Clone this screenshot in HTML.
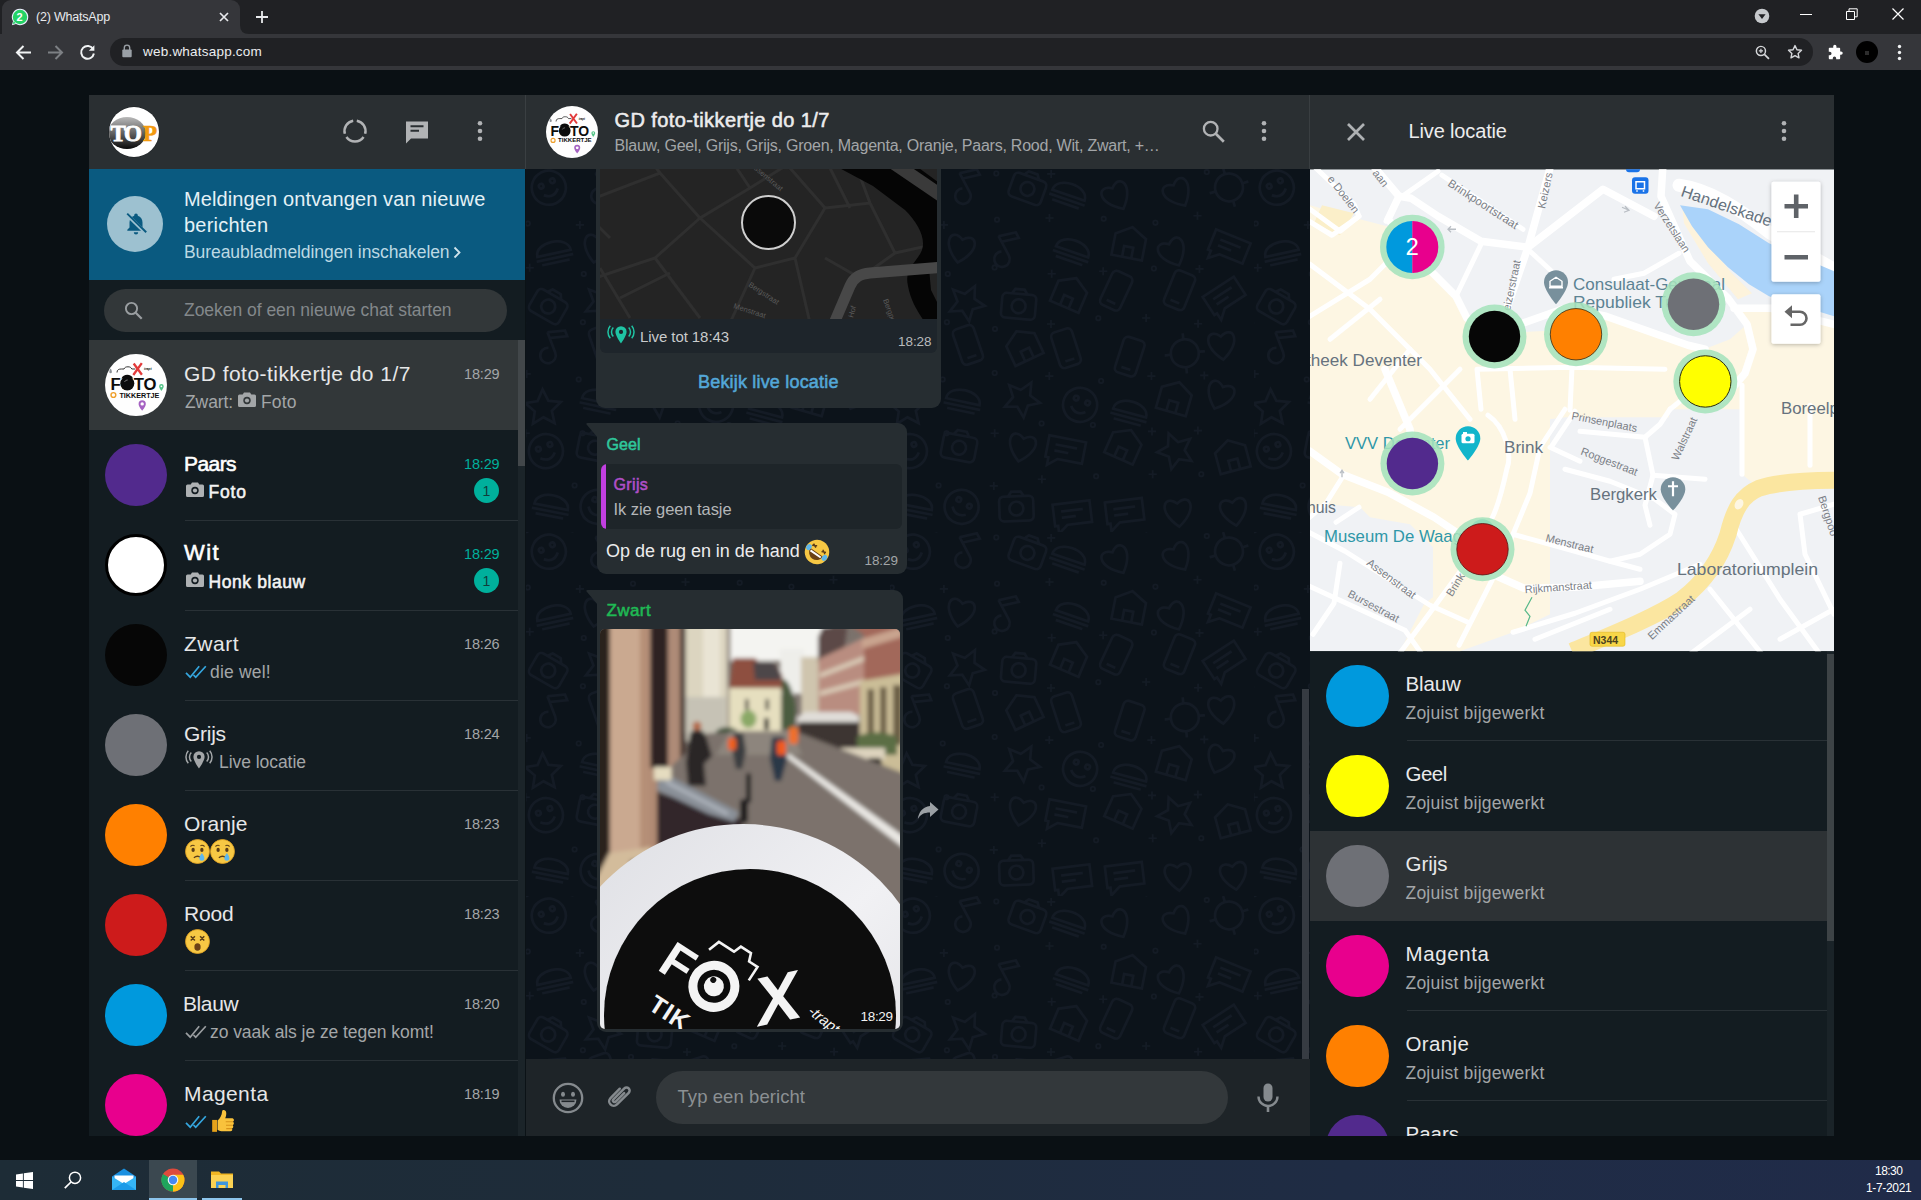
<!DOCTYPE html>
<html lang="nl">
<head>
<meta charset="utf-8">
<title>(2) WhatsApp</title>
<style>
*{box-sizing:border-box;margin:0;padding:0}
html,body{width:1921px;height:1200px;overflow:hidden;background:#0a1014}
body{position:relative;font-family:"Liberation Sans",sans-serif;color:#e9e9ea}
.a{position:absolute}
.t{position:absolute;white-space:nowrap;line-height:1;font-size:20px}
.c{position:absolute;border-radius:50%}
.sb{font-weight:normal!important;-webkit-text-stroke:.55px currentColor}
svg{position:absolute;overflow:visible}
/* chrome */
#tabbar{left:0;top:0;width:1921px;height:34px;background:#202124}
#tab{left:2px;top:0;width:238px;height:34px;background:#35363a;border-radius:9px 9px 0 0}
#toolbar{left:0;top:34px;width:1921px;height:36px;background:#35363a}
#omni{left:110px;top:38px;width:1703px;height:28px;border-radius:14px;background:#202124}
/* app */
#app{left:0;top:0;width:1921px;height:1200px;clip-path:inset(95px 87px 64px 89px)}
.hdr{top:0;height:73.500px;background:#2a2f32}
.sec{color:#a6a9ab}

.sep{height:1px;background:#293136}
.av{position:absolute;border-radius:50%;width:62px;height:62px}
</style>
<style>#ttab{letter-spacing:-0.211px}
#turl{letter-spacing:0.216px}
#b1{letter-spacing:0.114px}
#b2{letter-spacing:0.227px}
#b3{letter-spacing:-0.065px}
#sr{letter-spacing:-0.029px}
#n0{letter-spacing:0.455px}
#s0a{letter-spacing:-0.085px}
#s0b{letter-spacing:0.156px}
#n1{letter-spacing:-0.565px}
#s1{letter-spacing:0.823px}
#n2{letter-spacing:1.467px}
#s2{letter-spacing:0.583px}
#n3{letter-spacing:0.500px}
#s3{letter-spacing:0.194px}
#n4{letter-spacing:-0.268px}
#s4{letter-spacing:-0.051px}
#n5{letter-spacing:0.074px}
#n6{letter-spacing:-0.168px}
#n7{letter-spacing:-0.401px}
#s7{letter-spacing:-0.067px}
#n8{letter-spacing:0.394px}
#tm0{letter-spacing:-0.174px}
#tm1{letter-spacing:-0.174px}
#tm2{letter-spacing:-0.174px}
#tm3{letter-spacing:-0.174px}
#tm4{letter-spacing:-0.174px}
#tm5{letter-spacing:-0.174px}
#tm6{letter-spacing:-0.174px}
#tm7{letter-spacing:-0.174px}
#tm8{letter-spacing:-0.174px}
#h1{letter-spacing:0.402px}
#h2{letter-spacing:-0.234px}
#m1a{letter-spacing:-0.075px}
#m1t{letter-spacing:-0.049px}
#m1b{letter-spacing:0.185px}
#m2n{letter-spacing:0.101px}
#m2q{letter-spacing:0.352px}
#m2r{letter-spacing:-0.072px}
#m2m{letter-spacing:-0.016px}
#m2t{letter-spacing:-0.099px}
#m3n{letter-spacing:0.400px}
#m3t{letter-spacing:-0.299px}
#ft{letter-spacing:0.071px}
#rh{letter-spacing:-0.142px}
#r0{letter-spacing:-0.161px}
#r1{letter-spacing:-0.538px}
#r2{letter-spacing:-0.060px}
#r3{letter-spacing:0.603px}
#r4{letter-spacing:0.374px}
#ck1{letter-spacing:-0.533px}
#ck2{letter-spacing:-0.335px}
#q0{letter-spacing:0.212px}
#q1{letter-spacing:0.212px}
#q2{letter-spacing:0.212px}
#q3{letter-spacing:0.212px}
#q4{letter-spacing:0.212px}
#q5{letter-spacing:0.212px}
</style>
</head>
<body>
<svg width="0" height="0" style="left:0;top:0"><defs>
<symbol id="fotoLogo" viewBox="0 0 62 62">
<circle cx="31" cy="31" r="31" fill="#fefefe"/>
<path d="M12 18.500c0-3 2-3.500 4.500-3.500h2.500c.8-1.800 2-2.200 4-2.200s3 .6 3.800 2.200h3.500" stroke="#222" stroke-width=".9" fill="none"/>
<path d="M28.700 9.500l8.200 11.300M36.800 9.200L28.300 21" stroke="#e23a3a" stroke-width="2.300" fill="none"/>
<text x="39" y="16.200" font-family="Liberation Sans,sans-serif" font-size="3.400" font-weight="bold" font-style="italic" fill="#111">trapt</text>
<text x="5.500" y="35.700" font-family="Liberation Sans,sans-serif" font-size="16.800" font-weight="bold" fill="#0c0c0c" textLength="46" lengthAdjust="spacingAndGlyphs">FOTO</text>
<circle cx="22.300" cy="29.500" r="7" fill="#0c0c0c"/><path d="M16.500 24.500c1.500-5 10-5 11.500 0z" fill="#0c0c0c"/><path d="M19.500 28a3.200 3.200 0 0 1 3.200-2" stroke="#777" stroke-width="1" fill="none"/>
<text x="14.400" y="43.500" font-family="Liberation Sans,sans-serif" font-size="7.100" font-weight="bold" fill="#0c0c0c" textLength="40" lengthAdjust="spacingAndGlyphs">TIKKERTJE</text>
<circle cx="8.400" cy="41" r="2.400" stroke="#efa02c" stroke-width="1.400" fill="none"/>
<path d="M56.400 30a2.300 2.300 0 0 1 2.300 2.300c0 1.700-2.300 4.700-2.300 4.700s-2.300-3-2.300-4.700A2.300 2.300 0 0 1 56.400 30z" fill="#52c487"/><circle cx="56.400" cy="32.300" r=".9" fill="#fff"/>
<path d="M37.200 46.300a3.600 3.600 0 0 1 3.600 3.600c0 2.600-3.600 6.800-3.600 6.800s-3.600-4.200-3.600-6.800a3.600 3.600 0 0 1 3.600-3.600z" fill="#a562c2"/><circle cx="37.200" cy="49.900" r="1.700" fill="#fff"/>
<path d="M5.600 14.500c1 1.500 1.300 2.600 1.300 3.400a1.300 1.300 0 0 1-2.600 0c0-.8.300-1.900 1.300-3.400z" fill="#8d9196"/>
</symbol>
</defs></svg>

<!-- ===== Chrome browser frame ===== -->
<div id="tabbar" class="a"></div>
<div id="tab" class="a"></div>
<div id="toolbar" class="a"></div>
<div id="omni" class="a"></div>
<!-- tab -->
<svg style="left:11px;top:8px" width="18" height="18" viewBox="0 0 18 18"><path d="M9 .8a8.2 8.2 0 0 0-7 12.4L.9 17.2l4.1-1.1A8.2 8.2 0 1 0 9 .8z" fill="#eef"/><circle cx="9" cy="9" r="7.2" fill="#25d366"/><path d="M2.6 13.2 1.9 16l2.9-.8z" fill="#25d366"/></svg>
<span class="t" id="tfav" style="left:16.5px;top:3.6px;font-size:11px;font-weight:bold;color:#fff;line-height:26px">2</span>
<span class="t" id="ttab" style="left:36px;top:11px;font-size:12.5px;color:#e8eaed">(2) WhatsApp</span>
<svg style="left:219px;top:12px" width="10" height="10" viewBox="0 0 10 10"><path d="M1 1l8 8M9 1l-8 8" stroke="#e8eaed" stroke-width="1.7" fill="none"/></svg>
<svg style="left:255px;top:10px" width="14" height="14" viewBox="0 0 14 14"><path d="M7 1v12M1 7h12" stroke="#e8eaed" stroke-width="1.8" fill="none"/></svg>
<svg style="left:240px;top:25px" width="9" height="9" viewBox="0 0 9 9"><path d="M0 9V0q0 9 9 9z" fill="#35363a"/></svg>
<!-- window controls -->
<svg style="left:1754px;top:8px" width="16" height="16" viewBox="0 0 16 16"><circle cx="8" cy="8" r="7.3" fill="#c6c9cc"/><path d="M4.4 6.2h7.2L8 11z" fill="#202124"/></svg>
<div class="a" style="left:1800px;top:14px;width:12px;height:1px;background:#fff"></div>
<svg style="left:1846px;top:8px" width="12" height="12" viewBox="0 0 12 12"><path d="M.5 3.5h8v8h-8z" stroke="#fff" fill="none"/><path d="M3 3.5V.8h8.2v8H8.6" stroke="#fff" fill="none"/></svg>
<svg style="left:1892px;top:8px" width="12" height="12" viewBox="0 0 12 12"><path d="M.5.5l11 11M11.500 .5l-11 11" stroke="#fff" stroke-width="1.2" fill="none"/></svg>
<!-- nav buttons -->
<svg style="left:15px;top:44px" width="17" height="17" viewBox="0 0 17 17"><path d="M16 8.500H2.500M8.500 2l-6.500 6.500 6.500 6.500" stroke="#f1f3f4" stroke-width="2" fill="none"/></svg>
<svg style="left:47px;top:44px" width="17" height="17" viewBox="0 0 17 17"><path d="M1 8.500h13.500M8.500 2l6.500 6.500-6.500 6.500" stroke="#7d8084" stroke-width="2" fill="none"/></svg>
<svg style="left:79px;top:44px" width="17" height="17" viewBox="0 0 17 17"><path d="M14.200 5.200A6.400 6.400 0 1 0 14.900 9.500" stroke="#f1f3f4" stroke-width="2" fill="none"/><path d="M15.400 1.200v5.600H9.800z" fill="#f1f3f4"/></svg>
<!-- omnibox -->
<svg style="left:122px;top:44px" width="10" height="14" viewBox="0 0 10 14"><rect x="0.300" y="5.500" width="9.400" height="7.800" rx="1" fill="#9aa0a6"/><path d="M2.300 6V3.800a2.700 2.700 0 0 1 5.400 0V6" stroke="#9aa0a6" stroke-width="1.400" fill="none"/></svg>
<span class="t" id="turl" style="left:143px;top:45px;font-size:13.5px;color:#eceef0">web.whatsapp.com</span>
<svg style="left:1755px;top:45px" width="15.500" height="15.500" viewBox="0 0 17 17"><circle cx="6.500" cy="6.500" r="5" stroke="#d5d7da" stroke-width="1.600" fill="none"/><path d="M10.300 10.300l5 5" stroke="#d5d7da" stroke-width="1.900"/><path d="M6.500 4.200v4.600M4.200 6.500h4.600" stroke="#d5d7da" stroke-width="1.300"/></svg>
<svg style="left:1787px;top:44px" width="16" height="16" viewBox="0 0 18 18"><path d="M9 1.800l2.200 4.700 5.100.6-3.800 3.500 1 5L9 13.100l-4.500 2.500 1-5L1.700 7.100l5.100-.6z" stroke="#d5d7da" stroke-width="1.600" fill="none" stroke-linejoin="round"/></svg>
<svg style="left:1827px;top:45px" width="16" height="16" viewBox="0 0 18 18"><path d="M7 1.500a1.800 1.800 0 0 1 3.600 0V3h3.200a1 1 0 0 1 1 1v3.200h1a1.900 1.900 0 0 1 0 3.800h-1v4a1 1 0 0 1-1 1h-3.500v-1.200a1.900 1.900 0 0 0-3.800 0V16H3a1 1 0 0 1-1-1v-3.500h1.200a1.900 1.900 0 0 0 0-3.800H2V4a1 1 0 0 1 1-1h4z" fill="#fff"/></svg>
<div class="c" style="left:1856px;top:41px;width:22px;height:22px;background:#000"></div>
<div class="a" style="left:1865px;top:51px;width:4px;height:4px;background:#2c2c2c"></div>
<svg style="left:1897px;top:44px" width="5" height="17" viewBox="0 0 5 17"><circle cx="2.500" cy="2.500" r="1.700" fill="#f1f3f4"/><circle cx="2.500" cy="8.500" r="1.700" fill="#f1f3f4"/><circle cx="2.500" cy="14.500" r="1.700" fill="#f1f3f4"/></svg>

<!-- ===== WhatsApp app ===== -->
<div id="app" class="a">
<div class="a" style="left:89px;top:95px;width:1745px;height:1041px;background:#131c21"></div>
<div class="a hdr" style="left:89px;top:95px;width:436px"></div>
<svg style="left:108px;top:106px" width="52" height="52" viewBox="0 0 52 52"><defs><clipPath id="cpTop"><circle cx="26" cy="26" r="25"/></clipPath><linearGradient id="gTop" x1="0" y1="0" x2="0" y2="1"><stop offset="0" stop-color="#b9b9b9"/><stop offset=".45" stop-color="#6a6a6a"/><stop offset="1" stop-color="#0a0a0a"/></linearGradient></defs><circle cx="26" cy="26" r="25.500" fill="#1d2124"/><circle cx="26" cy="26" r="25" fill="#fff"/><g clip-path="url(#cpTop)"><ellipse cx="19" cy="27" rx="19" ry="16" fill="url(#gTop)"/><text x="2.500" y="35" font-family="Liberation Serif,serif" font-weight="bold" font-size="23" fill="#fff" stroke="#fff" stroke-width=".8" letter-spacing="-1.500">TO</text><text x="35" y="35" font-family="Liberation Serif,serif" font-weight="bold" font-size="23" fill="#f39a0e" stroke="#f39a0e" stroke-width=".6">P</text></g></svg>
<svg style="left:342px;top:118px" width="26" height="26" viewBox="0 0 26 26"><g fill="none" stroke="#b1b3b5" stroke-width="2.500"><path d="M14.800 2.650A10.500 10.500 0 0 1 23.150 15.720"/><path d="M21.600 19.020A10.500 10.500 0 0 1 4.400 19.020"/><path d="M2.850 15.720A10.500 10.500 0 0 1 11.200 2.650"/></g></svg>
<svg style="left:405px;top:120px" width="24" height="24" viewBox="0 0 24 24"><path d="M1 1.500h22v17H6L1 23.500z" fill="#b1b3b5"/><path d="M5.500 6.200h13M5.500 10.700h8.500" stroke="#2a2f32" stroke-width="2"/></svg>
<svg style="left:477px;top:120px" width="6" height="22" viewBox="0 0 6 22"><circle cx="3" cy="3.200" r="2.300" fill="#b1b3b5"/><circle cx="3" cy="11" r="2.300" fill="#b1b3b5"/><circle cx="3" cy="18.800" r="2.300" fill="#b1b3b5"/></svg>
<div class="a" style="left:89px;top:168.500px;width:436px;height:111.500px;background:#0a5a80"></div>
<div class="c" style="left:107px;top:196px;width:56px;height:56px;background:#9dc1d0"></div>
<svg style="left:122px;top:210px" width="28" height="28" viewBox="0 0 28 28"><path d="M14 3.500a1.800 1.800 0 0 1 1.800 1.800v.5c3 .9 4.700 3.500 4.700 6.700v5l2.200 2.300v1H5.300v-1l2.200-2.300v-5c0-3.200 1.700-5.800 4.700-6.700v-.5A1.800 1.800 0 0 1 14 3.500z" fill="#0a5a80"/><path d="M11.800 22.300h4.400a2.200 2.200 0 0 1-4.400 0z" fill="#0a5a80"/><path d="M4.500 4.200l19.500 19" stroke="#9dc1d0" stroke-width="3.600"/><path d="M5.200 3.600l19 18.700" stroke="#0a5a80" stroke-width="1.900"/></svg>
<span class="t" id="b1" style="left:184px;top:189px;font-size:20px;color:#e4f1f6">Meldingen ontvangen van nieuwe</span>
<span class="t" id="b2" style="left:184px;top:214.500px;font-size:20px;color:#e4f1f6">berichten</span>
<span class="t" id="b3" style="left:184px;top:244.200px;font-size:17.500px;color:#bcd9e4">Bureaubladmeldingen inschakelen</span>
<svg style="left:453px;top:246px" width="8" height="13" viewBox="0 0 8 13"><path d="M1.500 1.500l5 5-5 5" stroke="#cfe4ec" stroke-width="1.800" fill="none"/></svg>
<div class="a" style="left:104px;top:289px;width:403px;height:43px;border-radius:22px;background:#323739"></div>
<svg style="left:124px;top:301px" width="20" height="20" viewBox="0 0 20 20"><circle cx="7.500" cy="7.500" r="5.600" stroke="#9a9ea1" stroke-width="1.900" fill="none"/><path d="M11.700 11.700l6 6" stroke="#9a9ea1" stroke-width="2.200"/></svg>
<span class="t" id="sr" style="left:184px;top:302px;font-size:17.500px;color:#83888b">Zoeken of een nieuwe chat starten</span>
<div class="a" style="left:89px;top:340px;width:429px;height:90px;background:#323739"></div>
<div class="a" style="left:518px;top:340px;width:7px;height:796px;background:#1b2429"></div>
<div class="a" style="left:518px;top:340px;width:7px;height:126px;background:#42474a"></div>
<div class="a" style="left:524.500px;top:95px;width:1.500px;height:73.500px;background:#3a3f42"></div>
<div class="a" style="left:525px;top:169px;width:1.500px;height:967px;background:#0b1216"></div>
<div class="a sep" style="left:185px;top:520px;width:333px"></div>
<div class="a sep" style="left:185px;top:610px;width:333px"></div>
<div class="a sep" style="left:185px;top:700px;width:333px"></div>
<div class="a sep" style="left:185px;top:790px;width:333px"></div>
<div class="a sep" style="left:185px;top:880px;width:333px"></div>
<div class="a sep" style="left:185px;top:970px;width:333px"></div>
<div class="a sep" style="left:185px;top:1060px;width:333px"></div>
<svg style="left:105px;top:354px" width="62" height="62" viewBox="0 0 62 62"><use href="#fotoLogo"/></svg>
<span class="t" id="n0" style="left:184px;top:363.0px;font-size:21px;font-weight:normal;color:#e6e7e8">GD foto-tikkertje do 1/7</span>
<span class="t" id="tm0" style="left:464px;top:366.5px;font-size:14.500px;color:#a3a6a8">18:29</span>
<span class="t" id="s0a" style="left:185px;top:393.68625px;font-size:17.500px;color:#a3a6a8">Zwart:</span>
<svg style="left:238px;top:392px" width="18" height="15" viewBox="0 0 18 15"><path d="M1.500 2.500h3.200l1.300-2h6l1.300 2h3.200a1.500 1.500 0 0 1 1.500 1.500v9.500a1.500 1.500 0 0 1-1.500 1.500h-15A1.500 1.500 0 0 1 0 13.500V4a1.500 1.500 0 0 1 1.500-1.500z" fill="#a3a6a8"/><circle cx="9" cy="8.500" r="3.700" fill="#323739"/><circle cx="9" cy="8.500" r="2.100" fill="#a3a6a8"/></svg>
<span class="t" id="s0b" style="left:261px;top:393.68625px;font-size:17.500px;color:#a3a6a8">Foto</span>
<div class="c" style="left:105px;top:444px;width:62px;height:62px;background:#522a8d"></div>
<span class="t sb" id="n1" style="left:184px;top:453.0px;font-size:21px;font-weight:bold;color:#ffffff">Paars</span>
<span class="t" id="tm1" style="left:464px;top:456.5px;font-size:14.500px;color:#00b09c">18:29</span>
<div class="c" style="left:474px;top:478px;width:25px;height:25px;background:#00b09c"></div>
<span class="t" id="bd1" style="left:482.500px;top:484px;font-size:14px;color:#103d3a">1</span>
<svg style="left:186px;top:482px" width="18" height="15" viewBox="0 0 18 15"><path d="M1.500 2.500h3.200l1.300-2h6l1.300 2h3.200a1.500 1.500 0 0 1 1.500 1.500v9.500a1.500 1.500 0 0 1-1.500 1.500h-15A1.500 1.500 0 0 1 0 13.500V4a1.500 1.500 0 0 1 1.500-1.500z" fill="#aeb1b3"/><circle cx="9" cy="8.500" r="3.700" fill="#131c21"/><circle cx="9" cy="8.500" r="2.100" fill="#aeb1b3"/></svg>
<span class="t sb" id="s1" style="left:208.500px;top:483.68625px;font-size:17.500px;font-weight:bold;color:#f4f4f4">Foto</span>
<div class="c" style="left:105px;top:534px;width:62px;height:62px;background:#fff;border:3px solid #000"></div>
<span class="t sb" id="n2" style="left:184px;top:542.2px;font-size:22px;font-weight:bold;color:#ffffff">Wit</span>
<span class="t" id="tm2" style="left:464px;top:546.5px;font-size:14.500px;color:#00b09c">18:29</span>
<div class="c" style="left:474px;top:568px;width:25px;height:25px;background:#00b09c"></div>
<span class="t" id="bd2" style="left:482.500px;top:574px;font-size:14px;color:#103d3a">1</span>
<svg style="left:186px;top:572px" width="18" height="15" viewBox="0 0 18 15"><path d="M1.500 2.500h3.200l1.300-2h6l1.300 2h3.200a1.500 1.500 0 0 1 1.500 1.500v9.500a1.500 1.500 0 0 1-1.500 1.500h-15A1.500 1.500 0 0 1 0 13.500V4a1.500 1.500 0 0 1 1.500-1.500z" fill="#aeb1b3"/><circle cx="9" cy="8.500" r="3.700" fill="#131c21"/><circle cx="9" cy="8.500" r="2.100" fill="#aeb1b3"/></svg>
<span class="t sb" id="s2" style="left:208.500px;top:573.68625px;font-size:17.500px;font-weight:bold;color:#f4f4f4">Honk blauw</span>
<div class="c" style="left:105px;top:624px;width:62px;height:62px;background:#060606"></div>
<span class="t" id="n3" style="left:184px;top:633.0px;font-size:21px;font-weight:normal;color:#e6e7e8">Zwart</span>
<span class="t" id="tm3" style="left:464px;top:636.5px;font-size:14.500px;color:#a3a6a8">18:26</span>
<svg style="left:185px;top:665px" width="22" height="14" viewBox="0 0 22 14"><path d="M1 7.800l4.200 4.400L14.200 1.200M8.500 10l2.200 2.200L20.800 1.200" stroke="#35a6de" stroke-width="1.700" fill="none"/></svg>
<span class="t" id="s3" style="left:210px;top:663.68625px;font-size:17.500px;color:#a3a6a8">die wel!</span>
<div class="c" style="left:105px;top:714px;width:62px;height:62px;background:#6e7076"></div>
<span class="t" id="n4" style="left:184px;top:723.0px;font-size:21px;font-weight:normal;color:#e6e7e8">Grijs</span>
<span class="t" id="tm4" style="left:464px;top:726.5px;font-size:14.500px;color:#a3a6a8">18:24</span>
<svg style="left:185px;top:750px" width="28" height="20" viewBox="0 0 28 20"><path d="M14 1.200a5.600 5.600 0 0 0-5.600 5.600c0 4.200 5.600 11.700 5.600 11.700s5.600-7.500 5.600-11.700A5.600 5.600 0 0 0 14 1.200z" fill="#a3a6a8"/><circle cx="14" cy="6.900" r="2.100" fill="#131c21"/><path d="M6.300 2.500a6.500 6.500 0 0 0 0 9M3.300 .8a9.400 9.400 0 0 0 0 12.400M21.700 2.500a6.500 6.500 0 0 1 0 9M24.700 .8a9.400 9.400 0 0 1 0 12.400" stroke="#a3a6a8" stroke-width="1.500" fill="none"/></svg>
<span class="t" id="s4" style="left:219px;top:753.68625px;font-size:17.500px;color:#a3a6a8">Live locatie</span>
<div class="c" style="left:105px;top:804px;width:62px;height:62px;background:#ff8000"></div>
<span class="t" id="n5" style="left:184px;top:813.0px;font-size:21px;font-weight:normal;color:#e6e7e8">Oranje</span>
<span class="t" id="tm5" style="left:464px;top:816.5px;font-size:14.500px;color:#a3a6a8">18:23</span>
<svg style="left:185px;top:839px" width="25" height="25" viewBox="0 0 24 24"><circle cx="12" cy="12" r="11.500" fill="#f7c844"/><circle cx="12" cy="12" r="11.500" fill="none" stroke="#e0a020" stroke-width=".8"/><ellipse cx="7.800" cy="10.500" rx="1.600" ry="2" fill="#5b3d17"/><ellipse cx="16.200" cy="10.500" rx="1.600" ry="2" fill="#5b3d17"/><path d="M8.500 18q3.500-2.800 7 0" stroke="#5b3d17" stroke-width="1.300" fill="none"/><path d="M5.200 7.200q2-1.800 4-.8M18.800 7.200q-2-1.800-4-.8" stroke="#5b3d17" stroke-width="1" fill="none"/><path d="M16.200 13.500c1.800 2.400 2.400 3.800 2.400 5a2.400 2.400 0 0 1-4.800 0c0-1.200.6-2.600 2.400-5z" fill="#5eb7ec"/></svg>
<svg style="left:210px;top:839px" width="25" height="25" viewBox="0 0 24 24"><circle cx="12" cy="12" r="11.500" fill="#f7c844"/><circle cx="12" cy="12" r="11.500" fill="none" stroke="#e0a020" stroke-width=".8"/><ellipse cx="7.800" cy="10.500" rx="1.600" ry="2" fill="#5b3d17"/><ellipse cx="16.200" cy="10.500" rx="1.600" ry="2" fill="#5b3d17"/><path d="M8.500 18q3.500-2.800 7 0" stroke="#5b3d17" stroke-width="1.300" fill="none"/><path d="M5.200 7.200q2-1.800 4-.8M18.800 7.200q-2-1.800-4-.8" stroke="#5b3d17" stroke-width="1" fill="none"/><path d="M16.200 13.500c1.800 2.400 2.400 3.800 2.400 5a2.400 2.400 0 0 1-4.800 0c0-1.200.6-2.600 2.400-5z" fill="#5eb7ec"/></svg>
<div class="c" style="left:105px;top:894px;width:62px;height:62px;background:#cd1b1b"></div>
<span class="t" id="n6" style="left:184px;top:903.0px;font-size:21px;font-weight:normal;color:#e6e7e8">Rood</span>
<span class="t" id="tm6" style="left:464px;top:906.5px;font-size:14.500px;color:#a3a6a8">18:23</span>
<svg style="left:185px;top:929px" width="25" height="25" viewBox="0 0 24 24"><circle cx="12" cy="12" r="11.500" fill="#f7c844"/><circle cx="12" cy="12" r="11.500" fill="none" stroke="#e0a020" stroke-width=".8"/><path d="M5.500 7l4 4M9.500 7l-4 4M14.500 7l4 4M18.500 7l-4 4" stroke="#5b3d17" stroke-width="1.500"/><ellipse cx="12" cy="17.300" rx="3" ry="3.600" fill="#6b4116"/></svg>
<div class="c" style="left:105px;top:984px;width:62px;height:62px;background:#0099dd"></div>
<span class="t" id="n7" style="left:183px;top:993.0px;font-size:21px;font-weight:normal;color:#e6e7e8">Blauw</span>
<span class="t" id="tm7" style="left:464px;top:996.5px;font-size:14.500px;color:#a3a6a8">18:20</span>
<svg style="left:185px;top:1025px" width="22" height="14" viewBox="0 0 22 14"><path d="M1 7.800l4.200 4.400L14.200 1.200M8.500 10l2.200 2.200L20.800 1.200" stroke="#9a9ea1" stroke-width="1.700" fill="none"/></svg>
<span class="t" id="s7" style="left:210px;top:1023.68625px;font-size:17.500px;color:#a3a6a8">zo vaak als je ze tegen komt!</span>
<div class="c" style="left:105px;top:1074px;width:62px;height:62px;background:#e8008d"></div>
<span class="t" id="n8" style="left:184px;top:1083.0px;font-size:21px;font-weight:normal;color:#e6e7e8">Magenta</span>
<span class="t" id="tm8" style="left:464px;top:1086.5px;font-size:14.500px;color:#a3a6a8">18:19</span>
<svg style="left:185px;top:1115px" width="22" height="14" viewBox="0 0 22 14"><path d="M1 7.800l4.200 4.400L14.200 1.200M8.500 10l2.200 2.200L20.800 1.200" stroke="#35a6de" stroke-width="1.700" fill="none"/></svg>
<svg style="left:210px;top:1108px" width="26" height="26" viewBox="0 0 24 24"><path d="M2 11h4.500v11H2z" fill="#e6a21a"/><path d="M7 11.500c2-1.500 4-4.500 4.200-8.500C11.300 1.300 14.800 1 15 4.500c.1 2-.4 3.500-1 5h6.200c2 0 2.600 2.400 1 3.200 1.300.8 1 2.800-.3 3.200 1 .9.700 2.600-.6 3 .7 1.200 0 2.600-1.500 2.600H12c-2 0-3.500-.6-5-1.500z" fill="#f9c23c"/><path d="M14.500 12.700h6.700M14.800 15.900h6.100M15 19h5.300" stroke="#d8921a" stroke-width="1" fill="none"/></svg>

<div class="a" style="left:526px;top:168px;width:784px;height:891px;background:#0c131a"></div>
<svg style="left:526px;top:168px" width="784" height="891" viewBox="0 0 784 891"><defs><pattern id="dood" width="364" height="364" patternUnits="userSpaceOnUse"><g fill="none" stroke="#141b25" stroke-width="1.600"><g transform="translate(22.8 19.7) rotate(-26) scale(1.55)"><circle r="11"/><circle cx="-4" cy="-3" r="1.500"/><circle cx="4" cy="-3" r="1.500"/><path d="M-5 3q5 5 10 0"/></g><g transform="translate(83.8 18.7) rotate(-28) scale(1.55)"><path d="M-4-12v14a5 5 0 1 1-3-4.500M-4-12l11 3v4l-11-3"/></g><g transform="translate(137.4 20.9) rotate(20) scale(1.55)"><rect x="-11" y="-8" width="22" height="16" rx="3"/><circle r="4.500"/><path d="M-5-8l2-3h6l2 3"/></g><g transform="translate(180.5 21.3) rotate(19) scale(1.55)"><path d="M-11 4c0-10 22-10 22 0z"/><path d="M-12 7h24"/><path d="M-9 10h18"/></g><g transform="translate(226.1 27.2) rotate(-28) scale(1.55)"><path d="M0 10C-14-1-8-12 0-5 8-12 14-1 0 10z"/></g><g transform="translate(287.4 24.1) rotate(-30) scale(1.55)"><path d="M0 10C-14-1-8-12 0-5 8-12 14-1 0 10z"/></g><g transform="translate(339.0 19.4) rotate(-17) scale(1.55)"><circle r="9"/><path d="M0-9v-4M0 9v4M-9 0h-4M9 0h4"/></g><g transform="translate(26.7 79.3) rotate(-12) scale(1.55)"><path d="M-11 4c0-10 22-10 22 0z"/><path d="M-12 7h24"/><path d="M-9 10h18"/></g><g transform="translate(70.9 79.3) rotate(12) scale(1.55)"><path d="M0 10C-14-1-8-12 0-5 8-12 14-1 0 10z"/></g><g transform="translate(122.8 81.8) rotate(-28) scale(1.55)"><path d="M-4-12v14a5 5 0 1 1-3-4.500M-4-12l11 3v4l-11-3"/></g><g transform="translate(184.1 77.9) rotate(19) scale(1.55)"><path d="M-11 4c0-10 22-10 22 0z"/><path d="M-12 7h24"/><path d="M-9 10h18"/></g><g transform="translate(239.0 77.4) rotate(11) scale(1.55)"><path d="M-10 8V-6l10-6 10 6V8z"/><path d="M-3 8V1h6v7"/></g><g transform="translate(282.4 83.3) rotate(-25) scale(1.55)"><path d="M0 10C-14-1-8-12 0-5 8-12 14-1 0 10z"/></g><g transform="translate(339.3 78.5) rotate(22) scale(1.55)"><path d="M-12-7h24v14H-4l-6 5v-5h-2z"/><path d="M-7-2h14M-7 2h9"/></g><g transform="translate(22.2 138.6) rotate(30) scale(1.55)"><rect x="-11" y="-8" width="22" height="16" rx="3"/><circle r="4.500"/><path d="M-5-8l2-3h6l2 3"/></g><g transform="translate(76.5 134.6) rotate(27) scale(1.55)"><path d="M0-12l3.500 7.500 8 1-6 5.500 1.500 8L0 6l-7 4 1.500-8-6-5.500 8-1z"/></g><g transform="translate(128.6 138.3) rotate(5) scale(1.55)"><rect x="-11" y="-8" width="22" height="16" rx="3"/><circle r="4.500"/><path d="M-5-8l2-3h6l2 3"/></g><g transform="translate(179.1 127.3) rotate(23) scale(1.55)"><path d="M-10 8V-6l10-6 10 6V8z"/><path d="M-3 8V1h6v7"/></g><g transform="translate(226.2 122.7) rotate(25) scale(1.55)"><rect x="-7" y="-12" width="14" height="24" rx="3"/><path d="M-3 8h6"/></g><g transform="translate(289.5 122.2) rotate(22) scale(1.55)"><rect x="-7" y="-12" width="14" height="24" rx="3"/><path d="M-3 8h6"/></g><g transform="translate(334.1 127.9) rotate(-33) scale(1.55)"><path d="M-12-7h24v14H-4l-6 5v-5h-2z"/><path d="M-7-2h14M-7 2h9"/></g><g transform="translate(33.9 179.4) rotate(-21) scale(1.55)"><path d="M-4-12v14a5 5 0 1 1-3-4.500M-4-12l11 3v4l-11-3"/></g><g transform="translate(77.9 176.9) rotate(-19) scale(1.55)"><rect x="-7" y="-12" width="14" height="24" rx="3"/><path d="M-3 8h6"/></g><g transform="translate(134.3 180.2) rotate(-25) scale(1.55)"><path d="M-10 8V-6l10-6 10 6V8z"/><path d="M-3 8V1h6v7"/></g><g transform="translate(176.0 180.2) rotate(-18) scale(1.55)"><rect x="-7" y="-12" width="14" height="24" rx="3"/><path d="M-3 8h6"/></g><g transform="translate(239.7 188.6) rotate(18) scale(1.55)"><rect x="-7" y="-12" width="14" height="24" rx="3"/><path d="M-3 8h6"/></g><g transform="translate(294.8 185.3) rotate(-6) scale(1.55)"><circle r="9"/><path d="M0-9v-4M0 9v4M-9 0h-4M9 0h4"/></g><g transform="translate(331.7 176.2) rotate(-6) scale(1.55)"><path d="M0 10C-14-1-8-12 0-5 8-12 14-1 0 10z"/></g><g transform="translate(17.2 240.0) rotate(-2) scale(1.55)"><path d="M0-12l3.500 7.500 8 1-6 5.500 1.500 8L0 6l-7 4 1.500-8-6-5.500 8-1z"/></g><g transform="translate(74.1 227.6) rotate(12) scale(1.55)"><path d="M-11 4c0-10 22-10 22 0z"/><path d="M-12 7h24"/><path d="M-9 10h18"/></g><g transform="translate(132.0 230.7) rotate(30) scale(1.55)"><path d="M0-12l3.500 7.500 8 1-6 5.500 1.500 8L0 6l-7 4 1.500-8-6-5.500 8-1z"/></g><g transform="translate(190.1 236.8) rotate(23) scale(1.55)"><circle r="11"/><circle cx="-4" cy="-3" r="1.500"/><circle cx="4" cy="-3" r="1.500"/><path d="M-5 3q5 5 10 0"/></g><g transform="translate(241.2 239.0) rotate(15) scale(1.55)"><path d="M-11 4c0-10 22-10 22 0z"/><path d="M-12 7h24"/><path d="M-9 10h18"/></g><g transform="translate(284.2 232.1) rotate(16) scale(1.55)"><path d="M-10 8V-6l10-6 10 6V8z"/><path d="M-3 8V1h6v7"/></g><g transform="translate(330.1 226.2) rotate(21) scale(1.55)"><path d="M0 10C-14-1-8-12 0-5 8-12 14-1 0 10z"/></g><g transform="translate(19.9 283.1) rotate(-22) scale(1.55)"><circle r="11"/><circle cx="-4" cy="-3" r="1.500"/><circle cx="4" cy="-3" r="1.500"/><path d="M-5 3q5 5 10 0"/></g><g transform="translate(69.0 279.7) rotate(11) scale(1.55)"><rect x="-11" y="-8" width="22" height="16" rx="3"/><circle r="4.500"/><path d="M-5-8l2-3h6l2 3"/></g><g transform="translate(132.0 278.3) rotate(13) scale(1.55)"><path d="M0 10C-14-1-8-12 0-5 8-12 14-1 0 10z"/></g><g transform="translate(175.7 281.5) rotate(11) scale(1.55)"><path d="M-12-7h24v14H-4l-6 5v-5h-2z"/><path d="M-7-2h14M-7 2h9"/></g><g transform="translate(233.5 279.1) rotate(24) scale(1.55)"><path d="M-10 8V-6l10-6 10 6V8z"/><path d="M-3 8V1h6v7"/></g><g transform="translate(285.6 282.6) rotate(-22) scale(1.55)"><path d="M0-12l3.500 7.500 8 1-6 5.500 1.500 8L0 6l-7 4 1.500-8-6-5.500 8-1z"/></g><g transform="translate(342.5 290.3) rotate(-15) scale(1.55)"><path d="M-10 8V-6l10-6 10 6V8z"/><path d="M-3 8V1h6v7"/></g><g transform="translate(26.3 332.7) rotate(11) scale(1.55)"><path d="M-11 4c0-10 22-10 22 0z"/><path d="M-12 7h24"/><path d="M-9 10h18"/></g><g transform="translate(71.6 338.8) rotate(32) scale(1.55)"><circle r="11"/><circle cx="-4" cy="-3" r="1.500"/><circle cx="4" cy="-3" r="1.500"/><path d="M-5 3q5 5 10 0"/></g><g transform="translate(126.4 340.6) rotate(-2) scale(1.55)"><rect x="-11" y="-8" width="22" height="16" rx="3"/><circle r="4.500"/><path d="M-5-8l2-3h6l2 3"/></g><g transform="translate(182.3 345.3) rotate(-7) scale(1.55)"><path d="M-12-7h24v14H-4l-6 5v-5h-2z"/><path d="M-7-2h14M-7 2h9"/></g><g transform="translate(234.6 343.0) rotate(-7) scale(1.55)"><path d="M-12-7h24v14H-4l-6 5v-5h-2z"/><path d="M-7-2h14M-7 2h9"/></g><g transform="translate(288.0 343.2) rotate(-5) scale(1.55)"><path d="M0 10C-14-1-8-12 0-5 8-12 14-1 0 10z"/></g><g transform="translate(343.7 342.3) rotate(-10) scale(1.55)"><path d="M0 10C-14-1-8-12 0-5 8-12 14-1 0 10z"/></g><circle cx="0.2" cy="-1.7" r="2.200"/><circle cx="46.3" cy="-2.6" r="2.200"/><circle cx="106.3" cy="5.5" r="2.200"/><path d="M161.2 1.9v8M157.2 5.9h8"/><circle cx="206.4" cy="-3.4" r="2.200"/><path d="M256.4 -7.5v8M252.4 -3.5h8"/><circle cx="316.8" cy="4.1" r="2.200"/><circle cx="1.8" cy="55.6" r="2.200"/><path d="M53.9 52.9v8M49.9 56.9h8"/><circle cx="107.0" cy="51.7" r="2.200"/><path d="M159.5 46.0v8M155.5 50.0h8"/><circle cx="213.7" cy="50.8" r="2.200"/><circle cx="265.4" cy="54.7" r="2.200"/><path d="M307.5 43.8v8M303.5 47.8h8"/><path d="M3.7 95.8v8M-0.3 99.8h8"/><circle cx="57.8" cy="105.9" r="2.200"/><circle cx="104.6" cy="99.6" r="2.200"/><path d="M161.7 101.8v8M157.7 105.8h8"/><path d="M213.2 99.2v8M209.2 103.2h8"/><circle cx="263.9" cy="100.5" r="2.200"/><path d="M309.5 96.9v8M305.5 100.9h8"/><circle cx="-2.9" cy="155.0" r="2.200"/><circle cx="56.9" cy="154.2" r="2.200"/><circle cx="105.0" cy="160.9" r="2.200"/><path d="M161.0 152.0v8M157.0 156.0h8"/><circle cx="208.3" cy="150.2" r="2.200"/><path d="M256.2 146.0v8M252.2 150.0h8"/><path d="M308.1 151.7v8M304.1 155.7h8"/><path d="M0.7 201.9v8M-3.3 205.9h8"/><circle cx="52.7" cy="211.4" r="2.200"/><circle cx="104.7" cy="205.0" r="2.200"/><path d="M159.3 204.1v8M155.3 208.1h8"/><circle cx="211.1" cy="212.9" r="2.200"/><path d="M261.4 204.1v8M257.4 208.1h8"/><path d="M314.3 203.4v8M310.3 207.4h8"/><path d="M-0.3 261.3v8M-4.3 265.3h8"/><circle cx="56.5" cy="265.3" r="2.200"/><path d="M104.7 261.3v8M100.7 265.3h8"/><circle cx="151.6" cy="255.5" r="2.200"/><circle cx="202.9" cy="256.9" r="2.200"/><path d="M262.0 259.4v8M258.0 263.4h8"/><path d="M307.9 258.6v8M303.9 262.6h8"/><path d="M-4.3 312.6v8M-8.3 316.6h8"/><circle cx="48.6" cy="317.4" r="2.200"/><path d="M103.8 313.9v8M99.8 317.9h8"/><path d="M151.9 307.2v8M147.9 311.2h8"/><circle cx="206.1" cy="308.3" r="2.200"/><path d="M262.7 302.2v8M258.7 306.2h8"/><circle cx="311.3" cy="306.2" r="2.200"/></g></pattern></defs><rect width="784" height="891" fill="url(#dood)"/></svg>
<div class="a" style="left:596px;top:150px;width:345px;height:257.500px;border-radius:9px;background:#262d31"></div>
<div class="a" style="left:600px;top:150px;width:337px;height:203px;border-radius:6px;background:#1e252b"></div>
<svg style="left:600px;top:168px" width="337" height="151" viewBox="0 0 337 151"><defs><clipPath id="cpm1"><rect width="337" height="151"/></clipPath></defs><g clip-path="url(#cpm1)"><rect width="337" height="151" fill="#242424"/>
<g stroke="#2f2f2f" stroke-width="3" fill="none">
<path d="M-5 30L60 5l40 45 50-30 40-25M60 5l-15-20M100 50l-45 40-60 20M100 50l55 50 40-10 30-50-35-40M155 100l-25 55M55 90l45 60M195 90l15 65M225 40l45-5 25 50-35 25-35-20M270 35l-15-40M295 85l45-10M10 70l-20-20M150 20l-20-30M230 0l20 40"/>
<path d="M20 130l50-25M0 100l30 50"/></g>
<path d="M230-5L273 18 305 42C318 55 326 70 322 82 316 96 304 100 308 118 311 134 318 144 326 156H345V-5z" fill="#050505"/>
<path d="M312-5h30v22z" fill="#242424"/><path d="M329 100l10-2v40l-8-16z" fill="#242424"/>
<path d="M292-6l50 34" stroke="#3a3a3a" stroke-width="13" fill="none"/>
<path d="M232 160l18-42c4-9 10-12 20-13l75-6" stroke="#484848" stroke-width="11" fill="none"/>
<g font-family="Liberation Sans,sans-serif" font-size="7.500" fill="#5a5a5a"><text transform="translate(148 118) rotate(33)">Bergstraat</text><text transform="translate(133 140) rotate(18)">Menstraat</text><text transform="translate(150 -2) rotate(40)">Assenstraat</text><text transform="translate(283 132) rotate(70)">Bergpoo</text><text transform="translate(253 150) rotate(-75)">Hof</text></g>
</g></svg>
<div class="c" style="left:741px;top:195px;width:55px;height:55px;background:#0a0a0a;border:2px solid #cfcfcf"></div>
<svg style="left:607px;top:325px" width="28" height="20" viewBox="0 0 28 20"><path d="M14 1.200a5.600 5.600 0 0 0-5.600 5.600c0 4.200 5.600 11.700 5.600 11.700s5.600-7.500 5.600-11.700A5.600 5.600 0 0 0 14 1.200z" fill="#1fc4a4"/><circle cx="14" cy="6.900" r="2.100" fill="#1e252b"/><path d="M6.300 2.500a6.500 6.500 0 0 0 0 9M3.300 .8a9.400 9.400 0 0 0 0 12.400M21.700 2.500a6.500 6.500 0 0 1 0 9M24.700 .8a9.400 9.400 0 0 1 0 12.400" stroke="#1fc4a4" stroke-width="1.500" fill="none"/></svg>
<span class="t" id="m1a" style="left:640px;top:328.800px;font-size:15px;color:#c9cbcc">Live tot 18:43</span>
<span class="t" id="m1t" style="left:898px;top:335px;font-size:13.500px;color:#b9bbbd">18:28</span>
<span class="t sb" id="m1b" style="left:698px;top:372.500px;font-size:18px;font-weight:bold;color:#53a7d8">Bekijk live locatie</span>
<svg style="left:586px;top:423px" width="12" height="16" viewBox="0 0 12 16"><path d="M12 0H1.500C.3 0 0 1 .8 1.800L12 15z" fill="#262d31"/></svg>
<div class="a" style="left:596.500px;top:423px;width:310px;height:150.500px;border-radius:0 9px 9px 9px;background:#262d31"></div>
<span class="t sb" id="m2n" style="left:606.500px;top:436.500px;font-size:16px;font-weight:bold;color:#2fc79c">Geel</span>
<div class="a" style="left:600.500px;top:464px;width:301.500px;height:64.500px;border-radius:6px;background:#1e2529;overflow:hidden"><div class="a" style="left:0;top:0;width:5px;height:65px;background:#c13fe0"></div></div>
<span class="t sb" id="m2q" style="left:613.500px;top:476.500px;font-size:16px;font-weight:bold;color:#b04fc8">Grijs</span>
<span class="t" id="m2r" style="left:613.500px;top:501px;font-size:16.500px;color:#b4b6b8">Ik zie geen tasje</span>
<span class="t" id="m2m" style="left:606px;top:542px;font-size:18px;color:#ececed">Op de rug en in de hand</span>
<svg style="left:804px;top:538.500px" width="26" height="26" viewBox="0 0 24 24"><g transform="rotate(35 12 12)"><circle cx="12" cy="12" r="11.300" fill="#f7c844"/><path d="M5 12.500h14a7 7 0 0 1-14 0z" fill="#6b4116"/><path d="M6.200 13.300h11.600v1.800H6.200z" fill="#fff"/><path d="M4.800 9.500l4-2.300M19.200 9.500l-4-2.300M5 7.500l3.800 1.800M19 7.500l-3.800 1.800" stroke="#5b3d17" stroke-width="1.300" fill="none"/><ellipse cx="3.300" cy="12.500" rx="2.300" ry="3" fill="#5eb7ec"/><ellipse cx="20.700" cy="12.500" rx="2.300" ry="3" fill="#5eb7ec"/></g></svg>
<span class="t" id="m2t" style="left:864.500px;top:554px;font-size:13.500px;color:#a3a6a8">18:29</span>
<svg style="left:586px;top:589.500px" width="12" height="16" viewBox="0 0 12 16"><path d="M12 0H1.500C.3 0 0 1 .8 1.800L12 15z" fill="#262d31"/></svg>
<div class="a" style="left:596.500px;top:589.500px;width:306.500px;height:442px;border-radius:0 9px 9px 9px;background:#262d31"></div>
<span class="t sb" id="m3n" style="left:606.500px;top:601.600px;font-size:17px;font-weight:bold;color:#1fb954">Zwart</span>
<svg style="left:600px;top:629px" width="300" height="400" viewBox="0 0 300 400"><defs><clipPath id="cpph"><rect width="300" height="400" rx="5"/></clipPath><filter id="bl3" x="-10%" y="-10%" width="120%" height="120%"><feGaussianBlur stdDeviation="2.200"/></filter><filter id="bl1"><feGaussianBlur stdDeviation=".7"/></filter>
<linearGradient id="gdisc" x1="0" y1="0" x2="1" y2="1"><stop offset="0" stop-color="#dcdde2"/><stop offset=".5" stop-color="#f1f1f4"/><stop offset="1" stop-color="#d9dade"/></linearGradient></defs>
<g clip-path="url(#cpph)">
<rect width="300" height="400" fill="#7b726c"/>
<g filter="url(#bl3)">
<!-- sky -->
<path d="M118 -8h112v70h-45v-30h-55v-40z" fill="#f4f4f1"/>
<rect x="180" y="20" width="24" height="45" fill="#eeeeea"/>
<!-- left facade -->
<rect x="-8" y="-8" width="18" height="420" fill="#2a211f"/>
<rect x="10" y="-8" width="30.500" height="300" fill="#caa990"/>
<rect x="40" y="-8" width="10.500" height="300" fill="#b58f77"/><rect x="50" y="130" width="8" height="170" fill="#b08a73"/>
<rect x="50.500" y="-8" width="17.500" height="147" fill="#2d2222"/>
<rect x="68" y="-8" width="12" height="152" fill="#ae8b77"/>
<rect x="80" y="-8" width="6" height="150" fill="#4a3a34"/>
<rect x="85.500" y="-8" width="42" height="112" fill="#dcd5c0"/>
<rect x="103" y="-8" width="17" height="80" fill="#e9e4d4"/>
<rect x="86" y="68" width="40" height="44" fill="#c6c2b5"/>
<!-- far building -->
<path d="M129 62l4-33h22l4 4h14l9 12 2 18z" fill="#8e4f3f"/>
<path d="M153 33h20l8 12v6h-26z" fill="#4d4648"/>
<rect x="129" y="59" width="52" height="45" fill="#e6dfbf"/>
<rect x="145" y="70" width="3.500" height="11" fill="#4f4b42"/><rect x="165.500" y="70" width="3.500" height="11" fill="#4f4b42"/><rect x="164" y="89" width="5" height="12" fill="#3d3a34"/>
<path d="M182 50c6 0 9 8 12 20s2 24-3 30h-10z" fill="#4b5b41"/>
<ellipse cx="148.500" cy="90" rx="8" ry="9" fill="#8aa866"/>
<ellipse cx="127" cy="106" rx="12" ry="8" fill="#46573f"/>
<!-- right buildings -->
<rect x="201" y="28" width="19" height="64" fill="#cfc5ae"/>
<path d="M218 8l5-10h24l-3 24-26 12z" fill="#5b4a46"/>
<path d="M218.500 30l26-12 20-10v78h-46z" fill="#b98d80"/>
<path d="M220 44l44-17v5l-44 17zM220 62l44-12v5l-44 12z" fill="#d9cab6"/>
<path d="M244-8h64v60l-44 6V6z" fill="#a2685a"/>
<path d="M262 10l40-12v10l-40 12z" fill="#c9a48f"/>
<path d="M260 52l48-8v104l-48-14z" fill="#cbbd97"/>
<path d="M267.500 60h6.500v52h-6.500zM280 58h6.500v56H280zM293 56h9v60h-9z" fill="#6a5d45"/>
<path d="M197 88l8-5h46l8 4v7h-62z" fill="#e0ddd8"/>
<path d="M199 93h60v33l-60-12z" fill="#3d3631"/>
<path d="M257 108c8-6 30-6 40 0v18h-40z" fill="#5c6e45"/>
<rect x="241" y="119" width="44" height="12" fill="#ddd3bd"/>
<rect x="267.500" y="129" width="14" height="23" rx="3" fill="#26221f"/>
<!-- street -->
<path d="M108 104h92l108 42v140H57V150z" fill="#7b726c"/>
<path d="M130 102h62l10 24h-86z" fill="#8d857d"/>
<path d="M185 127l4.500-2L310 212v12z" fill="#e9e7e3"/>
<!-- people -->
<path d="M90 105c2-6 14-6 16 2l6 20-8 8 2 22h-18l-2-24z" fill="#2b2826"/><circle cx="97" cy="97" r="4.500" fill="#b36a4a"/>
<path d="M134 104h9l3 18-4 18h-6l-4-20z" fill="#3a3d3f"/><rect x="128" y="109" width="8" height="12" rx="2" fill="#f0601c"/>
<path d="M172 108h12l3 22-6 22h-6l-5-22z" fill="#2c3846"/><rect x="177" y="112" width="9" height="14" rx="2" fill="#f25a1e"/>
<rect x="189" y="98" width="9" height="17" rx="3" fill="#f0702a"/>
<path d="M9 224l42-6v60H-8v-20z" fill="#d3bc9b"/><path d="M30 232l28-6v60H30z" fill="#3a2c2a"/>
<!-- sign board -->
<path d="M57 163l85 28v100H57z" fill="#30262a"/>
<path d="M57.500 152l14-4 67 35-4 10-26-8-51-24z" fill="#8a9098"/>
<path d="M66 153l62 32" stroke="#b4bac2" stroke-width="3"/>
<rect x="54" y="138" width="17.500" height="13" fill="#e5dcc0"/>
<rect x="146" y="144" width="5" height="30" rx="2.500" fill="#1c1a1b"/><rect x="140" y="170" width="8" height="24" rx="3.500" fill="#1c1a1b"/>
</g>
<!-- white disc + black disc -->
<circle cx="143" cy="389" r="194" fill="url(#gdisc)" filter="url(#bl1)"/>
<circle cx="150" cy="386" r="146" fill="#101010" filter="url(#bl1)"/>
<g fill="#f4f4f4" font-family="Liberation Sans,sans-serif" font-weight="bold">
<g transform="translate(56 340) rotate(33)"><text x="0" y="0" font-size="50">F</text><circle cx="58" cy="-17" r="21" fill="none" stroke="#f4f4f4" stroke-width="9"/><circle cx="58" cy="-17" r="10"/><circle cx="54" cy="-22" r="3" fill="#101010"/>
<path d="M34-45l4-12h18l3-8h12l3 8h10v16" fill="none" stroke="#f4f4f4" stroke-width="2.600"/>
<text x="14" y="38" font-size="25" letter-spacing="1">TIK</text></g>
<g transform="translate(160 397) rotate(-12)"><text x="0" y="0" font-size="68" font-style="italic">X</text></g>
<text transform="translate(207 384) rotate(38)" font-size="15" font-style="italic" font-weight="normal">-trapt</text>

</g>
</g></svg>

<span class="t" id="m3t" style="left:860.500px;top:1010px;font-size:13.500px;color:#f2f2f2">18:29</span>
<svg style="left:917px;top:801px" width="22" height="20" viewBox="0 0 22 20"><path d="M13 1l8.500 7.500L13 16v-4.500C7 11.500 3.500 13.500.8 18 1.800 11 5.500 6 13 5z" fill="#9ba0a4"/></svg>
<div class="a hdr" style="left:526px;top:95px;width:784px"></div>
<svg style="left:545.500px;top:105.500px" width="52" height="52" viewBox="0 0 62 62"><use href="#fotoLogo"/></svg>
<span class="t sb" id="h1" style="left:614.500px;top:109.600px;font-size:20px;font-weight:bold;color:#ececed">GD foto-tikkertje do 1/7</span>
<span class="t" id="h2" style="left:614.500px;top:138px;font-size:16px;color:#a3a6a8">Blauw, Geel, Grijs, Grijs, Groen, Magenta, Oranje, Paars, Rood, Wit, Zwart, +…</span>
<svg style="left:1202px;top:120px" width="24" height="24" viewBox="0 0 24 24"><circle cx="8.700" cy="8.700" r="6.800" stroke="#b1b3b5" stroke-width="2.300" fill="none"/><path d="M13.800 13.800l8 8" stroke="#b1b3b5" stroke-width="2.700"/></svg>
<svg style="left:1261px;top:120px" width="6" height="22" viewBox="0 0 6 22"><circle cx="3" cy="3.200" r="2.300" fill="#b1b3b5"/><circle cx="3" cy="11" r="2.300" fill="#b1b3b5"/><circle cx="3" cy="18.800" r="2.300" fill="#b1b3b5"/></svg>
<div class="a" style="left:1302px;top:689px;width:7px;height:370px;background:#363b42"></div>
<div class="a" style="left:1309.500px;top:169px;width:1px;height:967px;background:#1a2227"></div>
<div class="a" style="left:526px;top:1058.500px;width:784px;height:78px;background:#1e2428"></div>
<div class="a" style="left:656px;top:1070.500px;width:572px;height:53px;border-radius:26.500px;background:#33383b"></div>
<span class="t" id="ft" style="left:677.500px;top:1087.500px;font-size:18.500px;color:#8b9093">Typ een bericht</span>
<svg style="left:551.500px;top:1081.500px" width="32" height="32" viewBox="0 0 32 32"><circle cx="16" cy="16" r="14.200" stroke="#858a8e" stroke-width="2.300" fill="none"/><ellipse cx="11" cy="12.300" rx="2" ry="2.500" fill="#858a8e"/><ellipse cx="21" cy="12.300" rx="2" ry="2.500" fill="#858a8e"/><path d="M7.500 17.500h17a8.500 8.500 0 0 1-17 0z" fill="#858a8e"/><path d="M9.500 19.300h13" stroke="#1e2428" stroke-width="1.600"/></svg>
<svg style="left:603px;top:1080px" width="32" height="32" viewBox="0 0 28 28"><g transform="rotate(45 14 14)"><path d="M10 9v11.500a4 4 0 0 0 8 0V6a2.700 2.700 0 0 0-5.400 0v13.500a1.400 1.400 0 0 0 2.800 0V9" stroke="#858a8e" stroke-width="2.200" fill="none" stroke-linecap="round"/></g></svg>
<svg style="left:1257px;top:1082px" width="22" height="32" viewBox="0 0 22 32"><rect x="6.500" y="1.500" width="9" height="18" rx="4.500" fill="#858a8e"/><path d="M1.500 14.500a9.500 9.500 0 0 0 19 0" stroke="#858a8e" stroke-width="2.400" fill="none"/><path d="M11 24v6" stroke="#858a8e" stroke-width="2.600"/></svg>

<div class="a" style="left:1310px;top:651px;width:524px;height:485px;background:#131c21"></div>
<div class="a" style="left:1310px;top:831px;width:517px;height:90px;background:#2d3235"></div>
<div class="c" style="left:1326px;top:664.5px;width:62.500px;height:62.500px;background:#0099dd"></div>
<span class="t" id="r0" style="left:1405.500px;top:674.2px;font-size:20.500px;color:#e9e9ea">Blauw</span>
<span class="t" id="q0" style="left:1405.500px;top:704.8px;font-size:17.500px;color:#a3a6a8">Zojuist bijgewerkt</span>
<div class="a sep" style="left:1407px;top:740px;width:420px"></div>
<div class="c" style="left:1326px;top:754.5px;width:62.500px;height:62.500px;background:#ffff00"></div>
<span class="t" id="r1" style="left:1405.500px;top:764.2px;font-size:20.500px;color:#e9e9ea">Geel</span>
<span class="t" id="q1" style="left:1405.500px;top:794.8px;font-size:17.500px;color:#a3a6a8">Zojuist bijgewerkt</span>
<div class="c" style="left:1326px;top:844.5px;width:62.500px;height:62.500px;background:#6e7076"></div>
<span class="t" id="r2" style="left:1405.500px;top:854.2px;font-size:20.500px;color:#e9e9ea">Grijs</span>
<span class="t" id="q2" style="left:1405.500px;top:884.8px;font-size:17.500px;color:#a3a6a8">Zojuist bijgewerkt</span>
<div class="c" style="left:1326px;top:934.5px;width:62.500px;height:62.500px;background:#e8008d"></div>
<span class="t" id="r3" style="left:1405.500px;top:944.2px;font-size:20.500px;color:#e9e9ea">Magenta</span>
<span class="t" id="q3" style="left:1405.500px;top:974.8px;font-size:17.500px;color:#a3a6a8">Zojuist bijgewerkt</span>
<div class="a sep" style="left:1407px;top:1010px;width:420px"></div>
<div class="c" style="left:1326px;top:1024.5px;width:62.500px;height:62.500px;background:#ff8000"></div>
<span class="t" id="r4" style="left:1405.500px;top:1034.2px;font-size:20.500px;color:#e9e9ea">Oranje</span>
<span class="t" id="q4" style="left:1405.500px;top:1064.8px;font-size:17.500px;color:#a3a6a8">Zojuist bijgewerkt</span>
<div class="a sep" style="left:1407px;top:1100px;width:420px"></div>
<div class="c" style="left:1326px;top:1114.5px;width:62.500px;height:62.500px;background:#522a8d"></div>
<span class="t" id="r5" style="left:1405.500px;top:1124.2px;font-size:20.500px;color:#e9e9ea">Paars</span>
<span class="t" id="q5" style="left:1405.500px;top:1154.8px;font-size:17.500px;color:#a3a6a8">Zojuist bijgewerkt</span>
<div class="a sep" style="left:1407px;top:1190px;width:420px"></div>
<div class="a" style="left:1827px;top:651px;width:7px;height:485px;background:#1a2328"></div>
<div class="a" style="left:1827px;top:654px;width:7px;height:287px;background:#3d4346"></div>
<svg style="left:1310px;top:168.500px" width="524" height="482.500" viewBox="0 0 524 482"><defs><clipPath id="cpmap"><rect width="524" height="482"/></clipPath><filter id="shd" x="-20%" y="-20%" width="140%" height="140%"><feDropShadow dx="0" dy="1" stdDeviation="2" flood-color="#000" flood-opacity=".28"/></filter></defs>
<g clip-path="url(#cpmap)">
<rect width="524" height="482" fill="#f0f2f5"/>
<!-- cream built-up area -->
<path d="M0 36L46 49 77 57 102 80 122 106 146 129 156 147 170 165 266 160 300 148 378 176 394 180 420 170 437 155 430 139 461 139 524 155V303L449 319 432 305V240H359v8H255l-15 2v195l-37 18-53 19H90l24-47 9-7v-50l-23-23-40-7-10-10-35-3-20 12z" fill="#fdf6e3"/>
<path d="M12 36l32 8-14 22-26-12z" fill="#fbefc9"/>
<path d="M372 36l20 30 28 36 22 22-14 6-30-36-24-40z" fill="#fdf3dc"/>
<!-- minor roads -->
<g stroke="#fff" fill="none" stroke-linecap="round" stroke-linejoin="round">
<g stroke-width="5">
<path d="M5 -2L44 35 49 47 30 62 0 40"/>
<path d="M49 47L22 66-4 50"/>
<path d="M128 2L88 30 76 52"/>
<path d="M0 95L60 140 120 200 160 250"/>
<path d="M-5 150L60 110 110 60"/>
<path d="M20 170L70 130M60 230L100 180"/>
<path d="M172 73L146 127M132 6L213 60"/>

<path d="M220 82L246 106"/>
<path d="M167 200L262 198 355 200M262 198L260 241M167 200l4 40"/>
<path d="M304 110L334 104 369 84"/>

<path d="M150 200L90 260M200 200L205 250"/>
<path d="M255 240L230 278 220 324 203 365 182 411 149 476"/>
<path d="M178 246c18 12 24 40 19 53-3 14-8 36-15 50"/>
<path d="M240 278l30 14M265 242l-24 36"/>
<path d="M33 307L16 334-5 352"/>
<path d="M49 338L26 353"/>
<path d="M-5 361L35 382 120 436 158 453"/>
<path d="M-5 415L95 461 112 485"/>
<path d="M30 394L24 434 3 465"/>
<path d="M151 401L124 438 89 485"/>
<path d="M203 365L265 382 300 392 330 400"/>
<path d="M203 463L265 444 330 420 390 395"/>
<path d="M225 470L300 440"/>
<path d="M255 300L300 312 345 330 365 345 360 365 330 385 300 392"/>
<path d="M270 262L335 268 350 255 360 240"/>
<path d="M335 268l8 38 52 4"/>
<path d="M343 306l-8 30 5 20"/>
<path d="M360 240L395 212"/>
<path d="M432 216V305"/>
<path d="M400 420L440 470 452 485M420 350L470 430 510 485M440 440L400 470 380 485M524 440L470 470"/>
<path d="M490 345L524 335M490 345l5 40 29 60"/>
<path d="M500 236v60"/>
</g>
<!-- main streets -->
<g stroke-width="7.500">
<path d="M62 -5L89 27 101 29 128 47 171 72 218 78 293 20 344 47"/>

<path d="M241 -5L218 78 197 139 190 165"/>
<path d="M89 27L78 50 102 78 122 103 146 127 157 149 176 162"/>
<path d="M176 167L255 139 296 147 378 176 395 180"/>
<path d="M353 -5L351 27 380 92 418 129 437 155 443 180 435 204 420 222"/>
<path d="M424 139H461L524 155"/>
<path d="M0 282L32 305 78 323 124 348 172 380 187 407 214 419 265 418 330 412"/>
<path d="M75 200L100 260 102 294"/>
</g>
<path d="M369 16C400 20 430 40 459 63L524 100" stroke-width="13"/>
</g>
<!-- water -->
<path d="M370 36L398 40 429 55 459 74 524 102V147L459 127 439 115 418 98 398 78 382 57z" fill="#aad3fa"/>
<!-- yellow road -->
<path d="M530 311C500 311 470 312 449 319 432 326 424 340 418 365 410 390 395 412 372 430 345 448 300 466 262 482" stroke="#fbe6a0" stroke-width="17" fill="none"/>
<ellipse cx="429" cy="335" rx="4" ry="5.500" transform="rotate(30 429 335)" fill="#fdf6e3"/>
<!-- tiny arrows / paths -->
<path d="M216 457l4-10-5-6 7-13" stroke="#58b98a" stroke-width="1.200" fill="none"/>
<g stroke="#b9bec4" stroke-width="1.300" fill="none"><path d="M146 60h-8m3-3l-3 3 3 3"/><path d="M312 38l7 3m-4-4l4 4-5 2"/><path d="M32 308v-7m-2 3l2-3 2 3"/></g>
<!-- labels -->
<g font-family="Liberation Sans,sans-serif" fill="#7b8087" font-size="11">
<text transform="translate(17 10) rotate(52)">e Doelen</text>
<text transform="translate(62 4) rotate(52)">aan</text>
<text transform="translate(137 16) rotate(33)" font-size="11.500">Brinkpoortstraat</text>
<text transform="translate(235 40) rotate(-78)">Keizers</text>
<text transform="translate(200 142) rotate(-78)">eizerstraat</text>
<text transform="translate(343 36) rotate(57)">Verzetslaan</text>
<text transform="translate(261 250) rotate(11)">Prinsenplaats</text>
<text transform="translate(270 285) rotate(21)">Roggestraat</text>
<text transform="translate(368 292) rotate(-65)">Walstraat</text>
<text transform="translate(235 372) rotate(14)">Menstraat</text>
<text transform="translate(215 424) rotate(-4)">Rijkmanstraat</text>
<text transform="translate(56 395) rotate(37)">Assenstraat</text>
<text transform="translate(37 427) rotate(28)">Bursestraat</text>
<text transform="translate(142 428) rotate(-58)">Brink</text>
<text transform="translate(342 471) rotate(-43)">Emmastraat</text>
<text transform="translate(508 328) rotate(72)">Bergpoo</text>
</g>
<g font-family="Liberation Sans,sans-serif" fill="#66727e" font-size="15">
<text transform="translate(370 26.500) rotate(19)" font-size="15.500" textLength="95" lengthAdjust="spacingAndGlyphs">Handelskade</text>
<text x="-4" y="197" font-size="17" textLength="116" lengthAdjust="spacingAndGlyphs">theek Deventer</text>
<text x="194" y="284" font-size="17" textLength="39" lengthAdjust="spacingAndGlyphs">Brink</text>
<text x="-3" y="344" font-size="17" textLength="29" lengthAdjust="spacingAndGlyphs">huis</text>
<text x="280" y="331" font-size="17" textLength="67" lengthAdjust="spacingAndGlyphs">Bergkerk</text>
<text x="367" y="406" font-size="17" textLength="141" lengthAdjust="spacingAndGlyphs">Laboratoriumplein</text>
<text x="471" y="245" font-size="17" textLength="84" lengthAdjust="spacingAndGlyphs">Boreelplein</text>
</g>
<g font-family="Liberation Sans,sans-serif" fill="#5c8393" font-size="15">
<text x="263" y="121" font-size="17" textLength="152" lengthAdjust="spacingAndGlyphs">Consulaat-Generaal</text>
<text x="263" y="139" font-size="17" textLength="134" lengthAdjust="spacingAndGlyphs">Republiek Turkije</text>
</g>
<g font-family="Liberation Sans,sans-serif" fill="#2f97a8" font-size="15.500">
<text x="35" y="280" font-size="17" textLength="105" lengthAdjust="spacingAndGlyphs">VVV Deventer</text>
<text x="14" y="373" font-size="17" textLength="138" lengthAdjust="spacingAndGlyphs">Museum De Waag</text>
</g>
<!-- N344 shield -->
<rect x="280" y="463" width="35" height="14" rx="2" fill="#f8d648" stroke="#e0b820" stroke-width=".6"/>
<text x="283" y="474.500" font-family="Liberation Sans,sans-serif" font-weight="bold" font-size="10.500" fill="#4a4220">N344</text>
<!-- POI pins -->
<g id="pinC"><path d="M246 101a12 12 0 0 1 12 12c0 8-12 22-12 22s-12-14-12-22a12 12 0 0 1 12-12z" fill="#78909c"/><path d="M240 117v-5l6-4 6 4v5zM239 118.500h14" stroke="#fff" stroke-width="1.400" fill="none"/></g>
<path d="M158 257a12.300 12.300 0 0 1 12.300 12.300c0 8-12.300 22-12.300 22s-12.300-14-12.300-22A12.300 12.300 0 0 1 158 257z" fill="#12b5cb"/><rect x="151.500" y="264.500" width="13" height="9.500" rx="1.500" fill="#fff"/><circle cx="158" cy="269.500" r="2.600" fill="#12b5cb"/><rect x="153" y="262.800" width="4" height="2.500" fill="#fff"/>
<path d="M363 308a12.300 12.300 0 0 1 12.300 12.300c0 8-12.300 21-12.300 21s-12.300-13-12.300-21A12.300 12.300 0 0 1 363 308z" fill="#78909c"/><path d="M363 312v15M358 317h10" stroke="#fff" stroke-width="2.200"/>
<path d="M172.500 350a12 12 0 0 1 12 12c0 8-12 22-12 22s-12-14-12-22a12 12 0 0 1 12-12z" fill="#13a8a8"/>
<rect x="322" y="8" width="16.500" height="16.500" rx="3" fill="#1a73e8"/><path d="M326 12.500h8.500v7H326zM327 21v1.500M333.500 21v1.500" stroke="#fff" stroke-width="1.500" fill="none"/>
<rect x="316" y="-4" width="14" height="7" rx="3" fill="#1a73e8"/>
<!-- live markers -->
<g>
<circle cx="102.300" cy="77.700" r="32.300" fill="#a5e3bc" fill-opacity=".88"/><path d="M102.300 51.700a26 26 0 0 0 0 52z" fill="#0099dd"/><path d="M102.300 51.700a26 26 0 0 1 0 52z" fill="#e8008d"/>
<text x="102.300" y="86" text-anchor="middle" font-family="Liberation Sans,sans-serif" font-size="24" fill="#fff">2</text>
<circle cx="184.500" cy="167.200" r="32" fill="#a5e3bc" fill-opacity=".88"/><circle cx="184.500" cy="167.200" r="25.700" fill="#060606"/>
<circle cx="266" cy="165" r="32" fill="#a5e3bc" fill-opacity=".88"/><circle cx="266" cy="165" r="25.700" fill="#ff8000" stroke="#3a2a10" stroke-width=".8"/>
<circle cx="383.500" cy="135" r="32" fill="#a5e3bc" fill-opacity=".88"/><circle cx="383.500" cy="135" r="25.700" fill="#6e7076"/>
<circle cx="395.300" cy="212.200" r="32" fill="#a5e3bc" fill-opacity=".88"/><circle cx="395.300" cy="212.200" r="25.700" fill="#ffff00" stroke="#2a2a10" stroke-width="1"/>
<circle cx="102.400" cy="294.300" r="32" fill="#a5e3bc" fill-opacity=".88"/><circle cx="102.400" cy="294.300" r="25.700" fill="#522a8d"/>
<circle cx="172.500" cy="380" r="32" fill="#a5e3bc" fill-opacity=".88"/><circle cx="172.500" cy="380" r="25.700" fill="#cd1b1b" stroke="#5a1010" stroke-width=".8"/>
</g>
<!-- controls -->
<g filter="url(#shd)"><rect x="461.500" y="12.500" width="49" height="100" rx="2" fill="#fff"/><rect x="461.500" y="125" width="49" height="49.500" rx="2" fill="#fff"/></g>
<path d="M467 62.500h38" stroke="#e6e6e6" stroke-width="1"/>
<path d="M474.500 37h23.500M486.200 25.200v23.500M474.500 88h23.500" stroke="#5f6368" stroke-width="4.600"/>
<path d="M479 142.500h11a6.500 6.500 0 0 1 0 13h-9.500" stroke="#666" stroke-width="2.600" fill="none"/><path d="M474.500 142.500l7.500-6.500v13z" fill="#666"/>
</g></svg>

<div class="a hdr" style="left:1310px;top:95px;width:524px;height:73.500px"></div>
<svg style="left:1347px;top:122.500px" width="18" height="18" viewBox="0 0 18 18"><path d="M1 1l16 16M17 1L1 17" stroke="#aeb1b3" stroke-width="2.700" fill="none"/></svg>
<span class="t" id="rh" style="left:1408.500px;top:120.500px;font-size:20px;color:#ececed">Live locatie</span>
<svg style="left:1781px;top:120px" width="6" height="22" viewBox="0 0 6 22"><circle cx="3" cy="3.200" r="2.300" fill="#b1b3b5"/><circle cx="3" cy="11" r="2.300" fill="#b1b3b5"/><circle cx="3" cy="18.800" r="2.300" fill="#b1b3b5"/></svg>
<div class="a" style="left:1308.500px;top:95px;width:1.500px;height:73.500px;background:#393e41"></div>

</div>
<div class="a" style="left:0;top:1160px;width:1921px;height:40px;background:linear-gradient(90deg,#1d2c36 0%,#1e2c3a 35%,#1f2c44 70%,#202b49 100%)"></div>
<svg style="left:16px;top:1172px" width="17" height="17" viewBox="0 0 17 17"><path d="M0 2.400L6.900 1.400V8H0zM7.800 1.300L17 0V8H7.800zM0 8.900H6.900V15.500L0 14.500zM7.800 8.900H17V17L7.800 15.700z" fill="#fff"/></svg>
<svg style="left:64px;top:1171px" width="18" height="18" viewBox="0 0 18 18"><circle cx="11" cy="6.800" r="5.600" stroke="#fff" stroke-width="1.500" fill="none"/><path d="M7 11L.8 17.200" stroke="#fff" stroke-width="1.700"/></svg>
<svg style="left:111px;top:1167px" width="26" height="26" viewBox="0 0 26 26"><path d="M1 9.500L13 1.500 25 9.500V23H1z" fill="#1a8fe0"/><path d="M3.500 8.500h19V18h-19z" fill="#fff"/><path d="M1 9.500L13 17 25 9.500V23H1z" fill="#35b5f5"/><path d="M1 23l12-8 12 8z" fill="#1c9be8"/></svg>
<div class="a" style="left:149px;top:1160px;width:48px;height:40px;background:#3b4850"></div>
<div class="a" style="left:149px;top:1198px;width:48px;height:2px;background:#8dc5ec"></div>
<div class="a" style="left:202px;top:1198px;width:40px;height:2px;background:#8dc5ec"></div>
<svg style="left:161px;top:1168px" width="24" height="24" viewBox="0 0 24 24"><circle cx="12" cy="12" r="11.500" fill="#de4a3c"/><path d="M12 12L2.040 6.250A11.500 11.500 0 0 0 12 23.500z" fill="#1fa45c"/><path d="M12 12L21.960 17.750A11.500 11.500 0 0 1 12 23.500z" fill="#fbc116"/><path d="M12 12l-9.960-5.750A11.500 11.500 0 0 0 6.250 21.960z" fill="#1fa45c"/><path d="M12 6.800H22.250A11.500 11.500 0 0 1 12 23.500L17.200 14z" fill="#fbc116"/><circle cx="12" cy="12" r="5.300" fill="#f5f5f5"/><circle cx="12" cy="12" r="4.200" fill="#4688f1"/></svg>
<svg style="left:210px;top:1169px" width="24" height="22" viewBox="0 0 24 22"><path d="M1 2.500h8l2 2h12V19H1z" fill="#f0b623"/><path d="M1 6h22v13H1z" fill="#fbd253"/><path d="M6 12.500h12V19H6z" fill="#3e96dd"/><path d="M8.500 16h7v3h-7z" fill="#fbd253"/></svg>
<span class="t" id="ck1" style="left:1875px;top:1165px;font-size:12px;color:#fff">18:30</span>
<span class="t" id="ck2" style="left:1866px;top:1182px;font-size:12px;color:#fff">1-7-2021</span>

</body>
</html>
